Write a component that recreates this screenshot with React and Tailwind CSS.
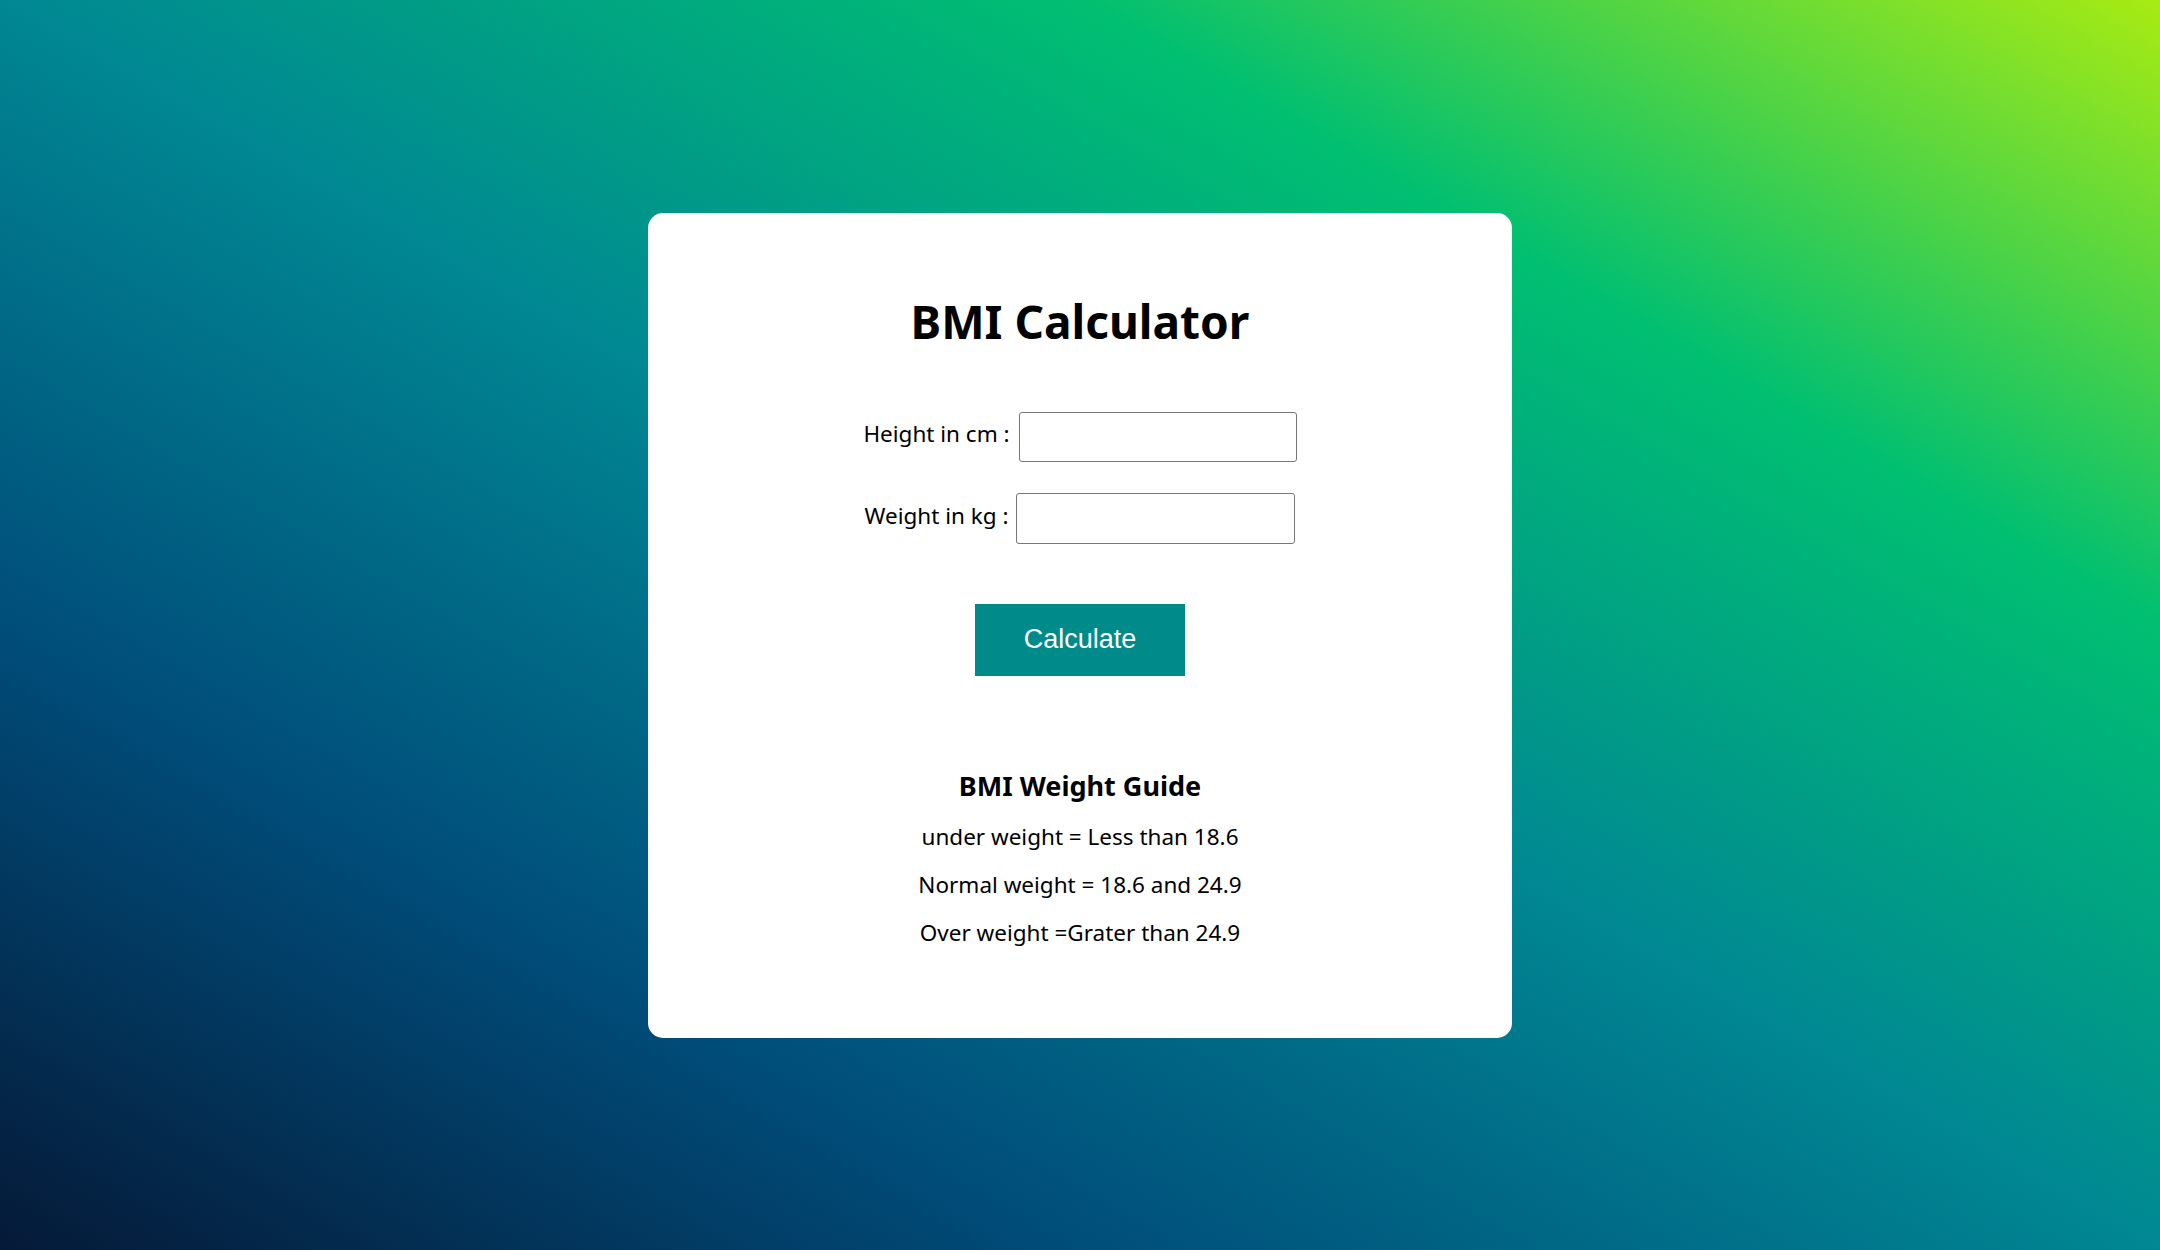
export default function App() {
	// ตัวเลขที่วัดจาก screenshot ขนาด 2160x1250
	return (
		<div className="w-full h-[1250px] flex items-center justify-center bg-[linear-gradient(to_right_top,#051937,#004d7a,#008793,#00bf72,#a8eb12)] font-['Noto_Sans',sans-serif] text-black">
			<div className="w-[864px] bg-white rounded-[15px] pt-[77px] pb-[81px] flex flex-col items-center">
				<h1 className="text-[46px] leading-[62px] font-bold">BMI Calculator</h1>

				<div className="mt-[60px] flex items-center justify-center gap-[9px]">
					<label className="text-[22.5px] leading-[31px] mb-[6px]">Height in cm :</label>
					<input
						type="text"
						className="w-[278px] h-[50px] border border-[#767676] rounded-[3px] px-2 text-[22px] outline-none"
					/>
				</div>
				<div className="mt-[31px] flex items-center justify-center gap-[8px]">
					<label className="text-[22.5px] leading-[31px] mb-[6px]">Weight in kg :</label>
					<input
						type="text"
						className="w-[279px] h-[51px] border border-[#767676] rounded-[3px] px-2 text-[22px] outline-none"
					/>
				</div>

				<button className="mt-[60px] w-[210px] h-[72px] bg-[#008b8b] text-white text-[27px] font-['Liberation_Sans',Arial,sans-serif]">
					Calculate
				</button>

				<h3 className="mt-[91px] text-[27px] leading-[37px] font-bold">BMI Weight Guide</h3>
				<div className="mt-[9px] flex flex-col items-center text-[22.5px] leading-[48px]">
					<p>under weight = Less than 18.6</p>
					<p>Normal weight = 18.6 and 24.9</p>
					<p>Over weight =Grater than 24.9</p>
				</div>
			</div>
		</div>
	)
}
